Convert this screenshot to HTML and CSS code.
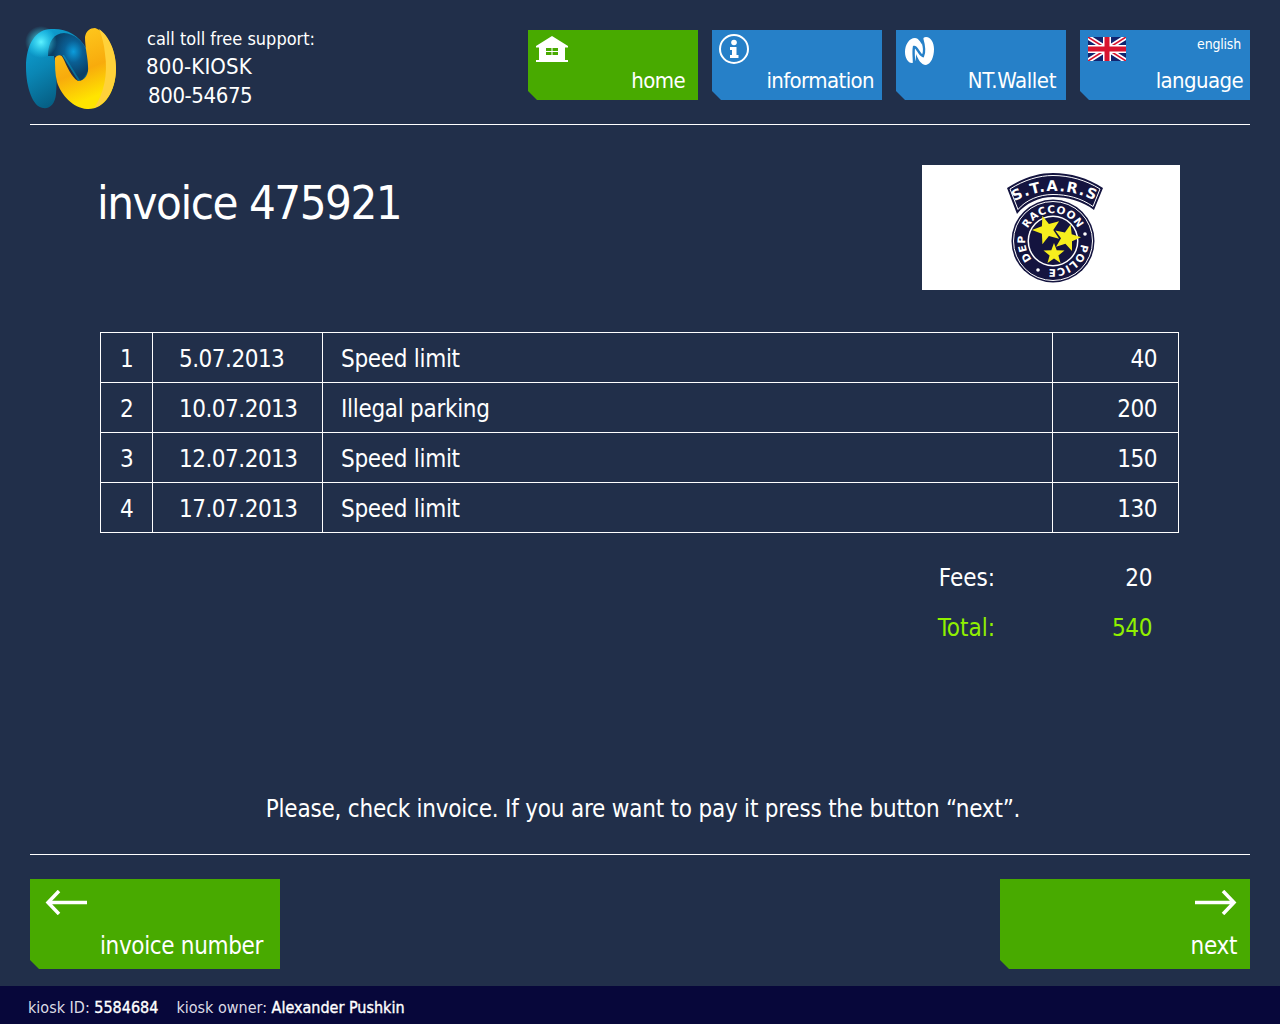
FILE: index.html
```html
<!DOCTYPE html>
<html lang="en">
<head>
<meta charset="utf-8">
<title>invoice 475921</title>
<link rel="stylesheet" href="styles.css">
</head>
<body>
<div class="page">
  <header class="header">
    <div class="brand">
      <svg class="logo" width="96" height="90" viewBox="0 0 96 90">
        <defs>
          <linearGradient id="lb" x1="0" y1="0" x2="0.5" y2="1">
            <stop offset="0" stop-color="#0fa8dc"/>
            <stop offset="0.5" stop-color="#0a86b4"/>
            <stop offset="1" stop-color="#05587c"/>
          </linearGradient>
          <linearGradient id="ly" x1="0.2" y1="0" x2="0.5" y2="1">
            <stop offset="0" stop-color="#ffcc20"/>
            <stop offset="0.55" stop-color="#f8ab0c"/>
            <stop offset="0.9" stop-color="#ffe400"/>
          </linearGradient>
          <radialGradient id="lg" cx="0.62" cy="0.38" r="0.5">
            <stop offset="0" stop-color="#0c9ddc"/>
            <stop offset="0.45" stop-color="#0a5f94"/>
            <stop offset="1" stop-color="#0b3f66"/>
          </radialGradient>
          <radialGradient id="lc">
            <stop offset="0" stop-color="#5ff2ff"/>
            <stop offset="1" stop-color="#2ce0ff" stop-opacity="0"/>
          </radialGradient>
        </defs>
        <path d="M2 45C2 22 12 7 27 7C42 6 55 13 62 26L66 50L56 62L38 33L30 34C33 48 33 60 32 72C31 82 26 87 19 86C9 85 2 66 2 45Z" fill="url(#lb)"/>
        <path d="M24 34C24 20 30 11 40 11C50 12 59 18 63 30L65 48L57 60L40 33L30 34Z" fill="url(#lg)"/>
        <circle cx="17" cy="20" r="16" fill="url(#lc)"/>
        <path d="M31 36C33 33 37 32 39 36C43 44 47 55 54 59C61 59 65 52 64 44C64 36 61 26 61 15C62 9 66 6 71 6C81 9 92 26 92 46C92 70 80 88 63 87C49 86 37 73 33 60C31 52 31 44 31 36Z" fill="url(#ly)"/>
        <path d="M75 7C84 13 92 28 92 46C92 66 83 82 70 86C80 72 84 52 81 32C80 22 78 14 75 7Z" fill="#ffd23a"/>
      </svg>
      <div class="support">
        <div class="support-label">call toll free support:</div>
        <div class="support-num">800-KIOSK</div>
        <div class="support-num support-num-alt">800-54675</div>
      </div>
    </div>
    <nav class="nav">
      <a class="tile tile-green nav-tile label-home">
        <svg class="nav-icon icon-home" width="34" height="28" viewBox="0 0 34 28"><path d="M17 1L33 11V12.500H30V25H33V27H1V25H4V12.500H1V11Z" fill="#fff"/><path d="M11 13H16.500V16H11ZM17.500 13H23V16H17.500ZM11 17H16.500V20H11ZM17.500 17H23V20H17.500Z" fill="#48aa00"/></svg>
        <span class="tile-label">home</span>
      </a>
      <a class="tile tile-blue nav-tile">
        <svg class="nav-icon icon-info" width="30" height="30" viewBox="0 0 30 30"><circle cx="15" cy="15" r="14" fill="none" stroke="#fff" stroke-width="2"/><circle cx="15" cy="8.500" r="2.800" fill="#fff"/><path d="M11 13H17.500V21H19.500V24H11V21H13V16H11Z" fill="#fff"/></svg>
        <span class="tile-label">information</span>
      </a>
      <a class="tile tile-blue nav-tile label-wallet">
        <svg class="nav-icon" width="30" height="28" viewBox="0 0 30 28"><path d="M11 1C5 1 1 8 1 15C1 21 4 26 8 26C12 26 12 21 12 17C14 22 17 28 22 28C27 27 30 20 30 12C30 6 27 0 22 0C18 0 18 5 19 9C16 4 14 1 11 1Z" fill="#fff"/><path d="M10 26C10 20 9 15 10 10C13 9 15 18 19 19C21 15 20 8 18 1" fill="none" stroke="#2680c8" stroke-width="2.400"/></svg>
        <span class="tile-label">NT.Wallet</span>
      </a>
      <a class="tile tile-blue nav-tile label-lang">
        <svg class="nav-icon" width="38" height="24" viewBox="0 0 38 24">
          <rect width="38" height="24" fill="#12246e"/>
          <path d="M0 0L38 24M38 0L0 24" stroke="#fff" stroke-width="5"/>
          <path d="M0 0L38 24M38 0L0 24" stroke="#d8142e" stroke-width="1.600"/>
          <path d="M19 0V24M0 12H38" stroke="#fff" stroke-width="8"/>
          <path d="M19 0V24M0 12H38" stroke="#d8142e" stroke-width="5"/>
        </svg>
        <span class="tile-sub">english</span>
        <span class="tile-label">language</span>
      </a>
    </nav>
  </header>

  <main class="main">
    <section class="title-row">
      <h1 class="title">invoice 475921</h1>
      <div class="badge-box">
        <svg width="98" height="112" viewBox="0 0 98 112">
          <path d="M1 16C16 6 32 1 47 1C64 1 82 6 97 16L88 38C76 29 62 25 47 25C33 25 20 31 11 42Z" fill="#14143f"/>
          <path d="M4 17C18 8 33 3.500 47 3.500C63 3.500 80 8 94 17L87 34.500C75 26 61 22.500 47 22.500C33 22.500 20 28 12 37.500Z" fill="none" stroke="#fff" stroke-width="1"/>
          <circle cx="47" cy="69" r="41.500" fill="#14143f"/>
          <circle cx="47" cy="69" r="39.500" fill="none" stroke="#fff" stroke-width="1"/>
          <circle cx="47" cy="69" r="25.500" fill="#fff"/>
          <circle cx="47" cy="69" r="24" fill="#14143f"/>
          <path id="t1" d="M0 34C18 23 33 19 48 19C63 19 80 23 98 33" fill="none"/>
          <text class="badge-text-a"><textPath href="#t1" startOffset="50%" text-anchor="middle">S.T.A.R.S</textPath></text>
          <path id="t2" d="M19 69A28 28 0 0 1 75 69" fill="none"/>
          <text class="badge-text-b"><textPath href="#t2" startOffset="50%" text-anchor="middle">RACCOON</textPath></text>
          <path id="t4" d="M33 93A28 28 0 0 1 22.800 55" fill="none"/>
          <text class="badge-text-b"><textPath href="#t4" startOffset="50%" text-anchor="middle">DEP</textPath></text>
          <path id="t5" d="M75 70.500A28 28 0 0 1 40.700 96.300" fill="none"/>
          <text class="badge-text-b"><textPath href="#t5" startOffset="50%" text-anchor="middle">POLICE</textPath></text>
          <circle cx="79" cy="62" r="1.800" fill="#fff"/>
          <circle cx="32" cy="98" r="1.800" fill="#fff"/>
          <polygon points="26,58 35.900,61.700 36.400,72.300 42.900,64 53.100,66.800 47.300,58 53.100,49.200 42.900,52 36.400,43.700 35.900,54.300" fill="#f6ee1e"/>
          <polygon points="64.600,52.500 65.700,62.200 75,65.300 66,69.300 66,79 59.400,71.800 50.100,74.800 55,66.300 49.300,58.400 58.900,60.400" fill="#f6ee1e"/>
          <polygon points="48,71 50.700,78.300 58.500,78.600 52.400,83.400 54.500,90.900 48,86.600 41.500,90.900 43.600,83.400 37.500,78.600 45.300,78.300" fill="#f6ee1e"/>
        </svg>
      </div>
    </section>

    <table class="invoice">
      <colgroup><col class="c-num"><col class="c-date"><col class="c-desc"><col class="c-amt"></colgroup>
      <tbody>
        <tr><td class="num">1</td><td class="date">5.07.2013</td><td class="desc">Speed limit</td><td class="amt">40</td></tr>
        <tr><td class="num">2</td><td class="date">10.07.2013</td><td class="desc">Illegal parking</td><td class="amt">200</td></tr>
        <tr><td class="num">3</td><td class="date">12.07.2013</td><td class="desc">Speed limit</td><td class="amt">150</td></tr>
        <tr><td class="num">4</td><td class="date">17.07.2013</td><td class="desc">Speed limit</td><td class="amt">130</td></tr>
      </tbody>
    </table>

    <div class="summary">
      <div class="sum-row"><span class="sum-label">Fees:</span><span class="sum-value">20</span></div>
      <div class="sum-row sum-total"><span class="sum-label">Total:</span><span class="sum-value">540</span></div>
    </div>

    <p class="message">Please, check invoice. If you are want to pay it press the button “next”.</p>
  </main>

  <section class="actions">
    <a class="tile tile-green action">
      <svg class="action-icon" width="43" height="25" viewBox="0 0 43 25"><path d="M42 12.500H3M14 1L3 12.500L14 24" fill="none" stroke="#fff" stroke-width="3.500"/></svg>
      <span class="action-label">invoice number</span>
    </a>
    <a class="tile tile-green action action-next">
      <svg class="action-icon" width="43" height="25" viewBox="0 0 43 25"><path d="M1 12.500H40M29 1L40 12.500L29 24" fill="none" stroke="#fff" stroke-width="3.500"/></svg>
      <span class="action-label">next</span>
    </a>
  </section>

  <footer class="footer">
    <span>kiosk ID: <b class="strong">5584684</b></span>
    <span>kiosk owner: <b class="strong">Alexander Pushkin</b></span>
  </footer>
</div>
</body>
</html>
```
FILE: styles.css
```css
* { box-sizing: border-box; }
html, body { margin: 0; padding: 0; }
body {
  background: #212f4a;
  color: #fff;
  font-family: "DejaVu Sans Condensed", "DejaVu Sans", sans-serif;
  font-stretch: condensed;
}
.page { width: 1280px; height: 1024px; display: flex; flex-direction: column; overflow: hidden; }

.header {
  height: 125px;
  margin: 0 30px;
  border-bottom: 1px solid #fff;
  display: flex;
  justify-content: space-between;
  padding-top: 30px;
}
.brand { display: flex; margin-left: -6px; margin-top: -8px; }
.logo { display: block; }
.support { margin-left: 27px; padding-top: 6px; }
.support-label { font-size: 18px; line-height: 22px; margin-bottom: 2px; }
.support-num { font-size: 22px; line-height: 29px; letter-spacing: 0.1px; margin-left: -1px; }
.support-num-alt { margin-left: 1px; letter-spacing: -0.4px; }

.nav { display: flex; gap: 14px; }
.tile {
  display: block;
  position: relative;
  color: #fff;
  clip-path: polygon(0 0, 100% 0, 100% 100%, 9px 100%, 0 calc(100% - 9px));
}
.tile-green { background: #48aa00; }
.tile-blue { background: #2680c8; }
.nav-tile { width: 170px; height: 70px; }
.nav-icon { position: absolute; left: 8px; top: 7px; }
.icon-home { left: 7px; top: 5px; }
.icon-info { left: 7px; top: 4px; }
.tile-label {
  position: absolute;
  right: 8px;
  bottom: 5px;
  font-size: 22px;
  line-height: 28px;
  letter-spacing: -0.6px;
}
.label-home .tile-label { right: 13px; }
.label-wallet .tile-label { right: 10px; letter-spacing: -0.4px; }
.label-lang .tile-label { right: 7px; }
.tile-sub { position: absolute; right: 9px; top: 5px; font-size: 14px; line-height: 18px; letter-spacing: -0.2px; }

.main { flex: 1; display: flex; flex-direction: column; padding: 40px 100px 0; }
.title-row { display: flex; justify-content: space-between; height: 167px; }
.title { margin: 10px 0 0 -3px; font-size: 47px; line-height: 56px; font-weight: normal; letter-spacing: -1.5px; }
.badge-box {
  width: 258px;
  height: 125px;
  background: #fff;
  display: flex;
  justify-content: center;
  align-items: center;
  padding-left: 8px;
}
.badge-text-a { font: bold 14.5px "DejaVu Sans", sans-serif; fill: #fff; letter-spacing: 1.2px; }
.badge-text-b { font: bold 10.5px "DejaVu Sans", sans-serif; fill: #fff; letter-spacing: 0.6px; }

.invoice { width: 1079px; border-collapse: collapse; table-layout: fixed; font-size: 24px; }
.c-num { width: 52px; }
.c-date { width: 170px; }
.c-desc { width: 730px; }
.c-amt { width: 126px; }
.invoice td { height: 50px; padding: 3px 0 0; border: 1px solid #fff; letter-spacing: -0.5px; }
.invoice .num { text-align: center; }
.invoice .date { padding-left: 26px; }
.invoice .desc { padding-left: 18px; letter-spacing: -0.3px; }
.invoice .amt { text-align: right; padding-right: 21px; }

.summary { margin-top: 20px; font-size: 24px; }
.sum-row { display: flex; justify-content: flex-end; height: 50px; line-height: 50px; padding-right: 28px; }
.sum-value { width: 157px; text-align: right; letter-spacing: -0.4px; }
.sum-total { color: #90f000; }

.message { margin: 140px 0 0; font-size: 24px; line-height: 32px; letter-spacing: -0.22px; text-align: center; padding-left: 6px; }

.actions {
  margin: 0 30px;
  border-top: 1px solid #fff;
  padding-top: 24px;
  height: 132px;
  display: flex;
  justify-content: space-between;
}
.action { width: 250px; height: 90px; }
.action-icon { position: absolute; left: 15px; top: 11px; }
.action-next .action-icon { left: auto; right: 13px; }
.action-label { position: absolute; right: 17px; bottom: 7px; font-size: 24px; line-height: 32px; letter-spacing: -0.35px; }
.action-next .action-label { right: 13px; }

.footer {
  height: 38px;
  background: #07073a;
  color: #dcdce6;
  display: flex;
  gap: 18px;
  align-items: center;
  padding: 5px 0 0 28px;
  font-size: 16px;
}
.strong { font-weight: normal; color: #fff; -webkit-text-stroke: 0.35px #fff; }
```
